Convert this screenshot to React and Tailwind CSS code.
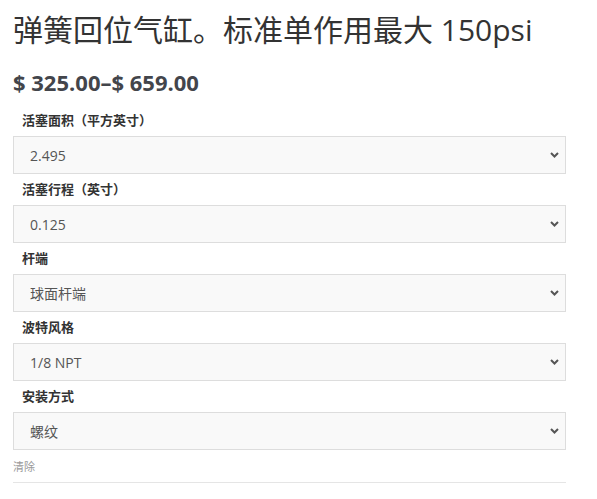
import React from 'react'

const fields = [
  { label: '活塞面积（平方英寸）', value: '2.495' },
  { label: '活塞行程（英寸）', value: '0.125' },
  { label: '杆端', value: '球面杆端' },
  { label: '波特风格', value: '1/8 NPT' },
  { label: '安装方式', value: '螺纹' },
]

const font = { fontFamily: '"Open Sans", "Noto Sans CJK SC", sans-serif' }

function Chevron() {
  return (
    <svg width="9" height="6" viewBox="0 0 9 6" className="shrink-0">
      <path d="M1 1 L4.5 4.5 L8 1" fill="none" stroke="#555" strokeWidth="2" />
    </svg>
  )
}

export default function App() {
  return (
    <div className="bg-white w-[597px] h-[499px] overflow-hidden px-[13px] pt-[9px]" style={font}>
      <h1 className="text-[30px] leading-[42px] text-[#333] font-normal">
        弹簧回位气缸。标准单作用最大 150psi
      </h1>
      <p className="mt-[18px] text-[22px] leading-[26px] font-bold text-[#43454b]">
        $ 325.00–$ 659.00
      </p>
      <div className="mt-[10px] w-[553px] flex flex-col">
        {fields.map(f => (
          <div key={f.label} className="flex flex-col">
            <div className="h-[31px] pl-[9px] pt-[5px] text-[13px] leading-[20px] font-bold text-[#333]">
              {f.label}
            </div>
            <div className="h-[38px] flex items-center justify-between border border-[#ddd] bg-[#f9f9f9] pl-[16px] pr-[6px] text-[14px] text-[#555]">
              <span>{f.value}</span>
              <Chevron />
            </div>
          </div>
        ))}
        <div className="pt-[9px] pb-[7px] text-[11px] leading-[16px] text-[#999]">清除</div>
        <div className="border-t border-[#e5e5e5]" />
      </div>
    </div>
  )
}
